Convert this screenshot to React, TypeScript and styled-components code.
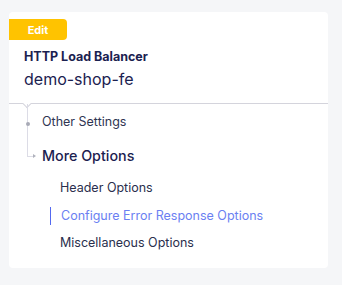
import React from "react";
import styled, { createGlobalStyle } from "styled-components";

const Global = createGlobalStyle`
  html, body { margin: 0; padding: 0; background: #f5f6f8; }
  body { font-family: Inter, "Noto Sans", sans-serif; -webkit-font-smoothing: antialiased; }
`;

const Page = styled.div`
  padding: 12px 14px 0 9px;
  width: 342px;
  height: 285px;
  box-sizing: border-box;
`;

const Card = styled.div`
  width: 319px;
  height: 256px;
  background: #ffffff;
  border-radius: 4px;
  display: flex;
  flex-direction: column;
`;

const Badge = styled.div`
  margin-top: 7px;
  width: 58px;
  height: 21px;
  background: #ffc300;
  color: #ffffff;
  font-size: 11px;
  font-weight: 700;
  display: flex;
  align-items: center;
  justify-content: center;
  border-radius: 0 4px 4px 0;
`;

const Header = styled.div`
  position: relative;
  padding: 9px 15px 0;
  height: 54px;
  border-bottom: 1px solid #d4d4dc;
  &::after {
    content: "";
    position: absolute;
    left: 15px;
    bottom: -4px;
    width: 5px;
    height: 5px;
    background: #ffffff;
    border-right: 1px solid #d4d4dc;
    border-bottom: 1px solid #d4d4dc;
    transform: rotate(45deg);
  }
`;

const Kind = styled.div`
  font-size: 12.5px;
  font-weight: 700;
  color: #1b2150;
  line-height: 16px;
`;

const Name = styled.div`
  margin-top: 3px;
  font-size: 16px;
  font-weight: 400;
  color: #1b2150;
  line-height: 22px;
`;

const Tree = styled.div`
  position: relative;
  padding: 10px 0 0 33px;
  display: flex;
  flex-direction: column;
  &::before {
    content: "";
    position: absolute;
    left: 18px;
    top: 0;
    width: 5px;
    height: 52px;
    border-left: 1px solid #dcdce6;
    border-bottom: 1px solid #dcdce6;
  }
`;

const Dot = styled.span`
  position: absolute;
  left: 17px;
  top: 18px;
  width: 4px;
  height: 4px;
  border-radius: 50%;
  background: #a8aab6;
`;

const Arrow = styled.span`
  position: absolute;
  left: 24px;
  top: 50px;
  width: 0;
  height: 0;
  border-top: 2px solid transparent;
  border-bottom: 2px solid transparent;
  border-left: 3px solid #b0b2bd;
`;

const Item = styled.div`
  font-size: 12.5px;
  color: #2f3552;
  line-height: 16px;
`;

const Section = styled.div`
  margin-top: 16px;
  font-size: 14.3px;
  font-weight: 500;
  color: #1b2150;
  line-height: 20px;
`;

const SubList = styled.div`
  margin-top: 14px;
  padding-left: 18px;
  display: flex;
  flex-direction: column;
  gap: 11.5px;
`;

const SubItem = styled.div<{ $active?: boolean }>`
  position: relative;
  font-size: 12.5px;
  line-height: 16px;
  color: ${(p) => (p.$active ? "#6b7ff2" : "#2a2f4d")};
  padding-left: ${(p) => (p.$active ? "1px" : "0")};
  &::before {
    content: "";
    display: ${(p) => (p.$active ? "block" : "none")};
    position: absolute;
    left: -10px;
    top: -1px;
    width: 1px;
    height: 18px;
    background: #5469f0;
  }
`;

export default function App() {
  return (
    <Page>
      <Global />
      <Card>
        <Badge>Edit</Badge>
        <Header>
          <Kind>HTTP Load Balancer</Kind>
          <Name>demo-shop-fe</Name>
        </Header>
        <Tree>
          <Dot />
          <Arrow />
          <Item>Other Settings</Item>
          <Section>More Options</Section>
          <SubList>
            <SubItem>Header Options</SubItem>
            <SubItem $active>Configure Error Response Options</SubItem>
            <SubItem>Miscellaneous Options</SubItem>
          </SubList>
        </Tree>
      </Card>
    </Page>
  );
}
